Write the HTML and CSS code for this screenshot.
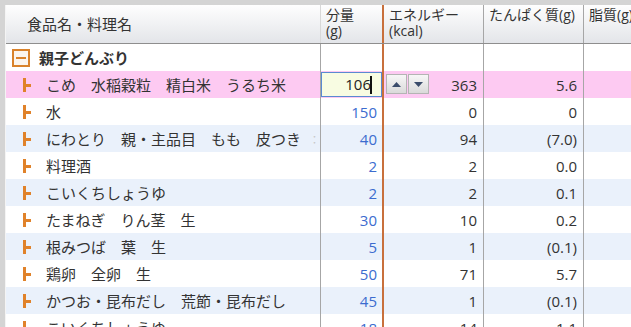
FILE: index.html
```html
<!DOCTYPE html>
<html lang="ja">

<head>
    <meta charset="UTF-8" />
    <title>親子どんぶり</title>
    <link rel="stylesheet" href="styles.css">
</head>

<body>
    <div class="grid">
        <div class="head">
            <div class="cell c-name hd-name">食品名・料理名</div>
            <div class="cell c-qty">分量<br>(g)</div>
            <div class="cell c-num">エネルギー<br>(kcal)</div>
            <div class="cell c-num">たんぱく質(g)</div>
            <div class="cell c-fat">脂質(g)</div>
        </div>

        <div class="row">
            <div class="cell c-name">
                <svg class="toggle" width="18" height="18" viewBox="0 0 18 18">
                    <rect x="1" y="1" width="16" height="16" fill="#fbf5ee" stroke="#d9822b" stroke-width="2" />
                    <rect x="4" y="8" width="10" height="2" fill="#d9822b" />
                </svg>
                <span class="parent">親子どんぶり</span>
            </div>
            <div class="cell c-qty"></div>
            <div class="cell c-num"></div>
            <div class="cell c-num"></div>
            <div class="cell c-fat"></div>
        </div>

        <div class="row selected">
            <div class="cell c-name"><svg class="branch" width="8" height="14"><rect width="3" height="14" fill="#e0822a" /><rect x="3" y="6" width="5" height="3" fill="#e0822a" /></svg>こめ　水稲穀粒　精白米　うるち米</div>
            <div class="cell c-qty">
                <div class="editor">106<span class="caret"></span></div>
            </div>
            <div class="cell c-num val">
                <div class="spinner">
                    <span class="spin"><svg width="9" height="5"><polygon points="0,5 4.5,0 9,5" fill="#3b4c6b" /></svg></span>
                    <span class="spin"><svg width="9" height="5"><polygon points="0,0 4.5,5 9,0" fill="#3b4c6b" /></svg></span>
                </div>363
            </div>
            <div class="cell c-num val">5.6</div>
            <div class="cell c-fat"></div>
        </div>

        <div class="row">
            <div class="cell c-name"><svg class="branch" width="8" height="14"><rect width="3" height="14" fill="#e0822a" /><rect x="3" y="6" width="5" height="3" fill="#e0822a" /></svg>水</div>
            <div class="cell c-qty qty">150</div>
            <div class="cell c-num val">0</div>
            <div class="cell c-num val">0</div>
            <div class="cell c-fat"></div>
        </div>

        <div class="row alt">
            <div class="cell c-name"><svg class="branch" width="8" height="14"><rect width="3" height="14" fill="#e0822a" /><rect x="3" y="6" width="5" height="3" fill="#e0822a" /></svg>にわとり　親・主品目　もも　皮つき<span class="clip">：</span></div>
            <div class="cell c-qty qty">40</div>
            <div class="cell c-num val">94</div>
            <div class="cell c-num val">(7.0)</div>
            <div class="cell c-fat"></div>
        </div>

        <div class="row">
            <div class="cell c-name"><svg class="branch" width="8" height="14"><rect width="3" height="14" fill="#e0822a" /><rect x="3" y="6" width="5" height="3" fill="#e0822a" /></svg>料理酒</div>
            <div class="cell c-qty qty">2</div>
            <div class="cell c-num val">2</div>
            <div class="cell c-num val">0.0</div>
            <div class="cell c-fat"></div>
        </div>

        <div class="row alt">
            <div class="cell c-name"><svg class="branch" width="8" height="14"><rect width="3" height="14" fill="#e0822a" /><rect x="3" y="6" width="5" height="3" fill="#e0822a" /></svg>こいくちしょうゆ</div>
            <div class="cell c-qty qty">2</div>
            <div class="cell c-num val">2</div>
            <div class="cell c-num val">0.1</div>
            <div class="cell c-fat"></div>
        </div>

        <div class="row">
            <div class="cell c-name"><svg class="branch" width="8" height="14"><rect width="3" height="14" fill="#e0822a" /><rect x="3" y="6" width="5" height="3" fill="#e0822a" /></svg>たまねぎ　りん茎　生</div>
            <div class="cell c-qty qty">30</div>
            <div class="cell c-num val">10</div>
            <div class="cell c-num val">0.2</div>
            <div class="cell c-fat"></div>
        </div>

        <div class="row alt">
            <div class="cell c-name"><svg class="branch" width="8" height="14"><rect width="3" height="14" fill="#e0822a" /><rect x="3" y="6" width="5" height="3" fill="#e0822a" /></svg>根みつば　葉　生</div>
            <div class="cell c-qty qty">5</div>
            <div class="cell c-num val">1</div>
            <div class="cell c-num val">(0.1)</div>
            <div class="cell c-fat"></div>
        </div>

        <div class="row">
            <div class="cell c-name"><svg class="branch" width="8" height="14"><rect width="3" height="14" fill="#e0822a" /><rect x="3" y="6" width="5" height="3" fill="#e0822a" /></svg>鶏卵　全卵　生</div>
            <div class="cell c-qty qty">50</div>
            <div class="cell c-num val">71</div>
            <div class="cell c-num val">5.7</div>
            <div class="cell c-fat"></div>
        </div>

        <div class="row alt">
            <div class="cell c-name"><svg class="branch" width="8" height="14"><rect width="3" height="14" fill="#e0822a" /><rect x="3" y="6" width="5" height="3" fill="#e0822a" /></svg>かつお・昆布だし　荒節・昆布だし</div>
            <div class="cell c-qty qty">45</div>
            <div class="cell c-num val">1</div>
            <div class="cell c-num val">(0.1)</div>
            <div class="cell c-fat"></div>
        </div>

        <div class="row">
            <div class="cell c-name"><svg class="branch" width="8" height="14"><rect width="3" height="14" fill="#e0822a" /><rect x="3" y="6" width="5" height="3" fill="#e0822a" /></svg>こいくちしょうゆ</div>
            <div class="cell c-qty qty">18</div>
            <div class="cell c-num val">14</div>
            <div class="cell c-num val">1.1</div>
            <div class="cell c-fat"></div>
        </div>
    </div>
</body>

</html>
```

FILE: styles.css
```css
body {
    margin: 0;
    height: 327px;
    overflow: hidden;
    background-color: #d4d4d4;
    font-family: "Open Sans", "Noto Sans CJK JP", sans-serif;
    color: #333;
}

.grid {
    margin: 5px 0 0 5px;
    border-left: 1px solid #f4f4f4;
    background: #fff;
}

.head,
.row {
    display: grid;
    grid-template-columns: 315px 63px 100px 100px 1fr;
}

.cell {
    box-sizing: border-box;
    min-width: 0;
    white-space: nowrap;
    overflow: hidden;
}

/* header */
.head {
    height: 38px;
    background: linear-gradient(#fefefe, #e3e5e9);
    border-bottom: 1px solid #8e8e8e;
    font-size: 14px;
    line-height: 16px;
}

.head .cell {
    padding: 2px 5px 0 5px;
}

.head .c-name {
    border-right-color: #d8d8d8;
}

.head .hd-name {
    display: flex;
    align-items: center;
    padding: 0 0 0 21px;
    font-size: 15px;
}

.head .c-num:last-of-type {
    padding-left: 6px;
}

/* column borders */
.c-name {
    border-right: 1px solid #a6a6a6;
}

.c-qty {
    border-right: 2px solid #c8703c;
}

.c-num {
    border-right: 1px solid #a6a6a6;
}

/* body rows */
.row {
    height: 27px;
    font-size: 15px;
}

.row .cell {
    display: flex;
    align-items: center;
}

.row.alt {
    background-color: #eaf1fb;
}

.row.selected {
    background-color: #fdcaf2;
}

.row .c-name {
    padding-left: 17px;
}

.branch {
    flex: none;
    margin-right: 15px;
}

.toggle {
    flex: none;
    margin: 0 9px 0 -11px;
}

.parent {
    font-weight: 700;
}

.clip {
    color: #c8c8c8;
    font-size: 11px;
    margin-left: 8px;
}

.qty,
.val {
    justify-content: flex-end;
}

.qty {
    padding-right: 5px;
    color: #3c6ccf;
}

.val {
    padding-right: 6px;
}

.row .c-num {
    position: relative;
}

/* cell editor */
.editor {
    align-self: flex-start;
    box-sizing: border-box;
    width: 61px;
    height: 25px;
    margin-top: 1px;
    border: 1px solid #5a8ad2;
    background-color: #f8fce2;
    color: #222;
    text-align: right;
    padding-right: 10px;
    line-height: 23px;
    position: relative;
}

.caret {
    position: absolute;
    right: 9px;
    top: 3px;
    width: 2px;
    height: 18px;
    background: #111;
}

.spinner {
    position: absolute;
    left: 2px;
    top: 3px;
    display: flex;
    gap: 1px;
}

.spin {
    box-sizing: border-box;
    width: 21px;
    height: 20px;
    border: 1px solid #b4b4b4;
    background: linear-gradient(#f7f7f7, #dadada);
    display: flex;
    align-items: center;
    justify-content: center;
}

.spin svg {
    display: block;
}
```
